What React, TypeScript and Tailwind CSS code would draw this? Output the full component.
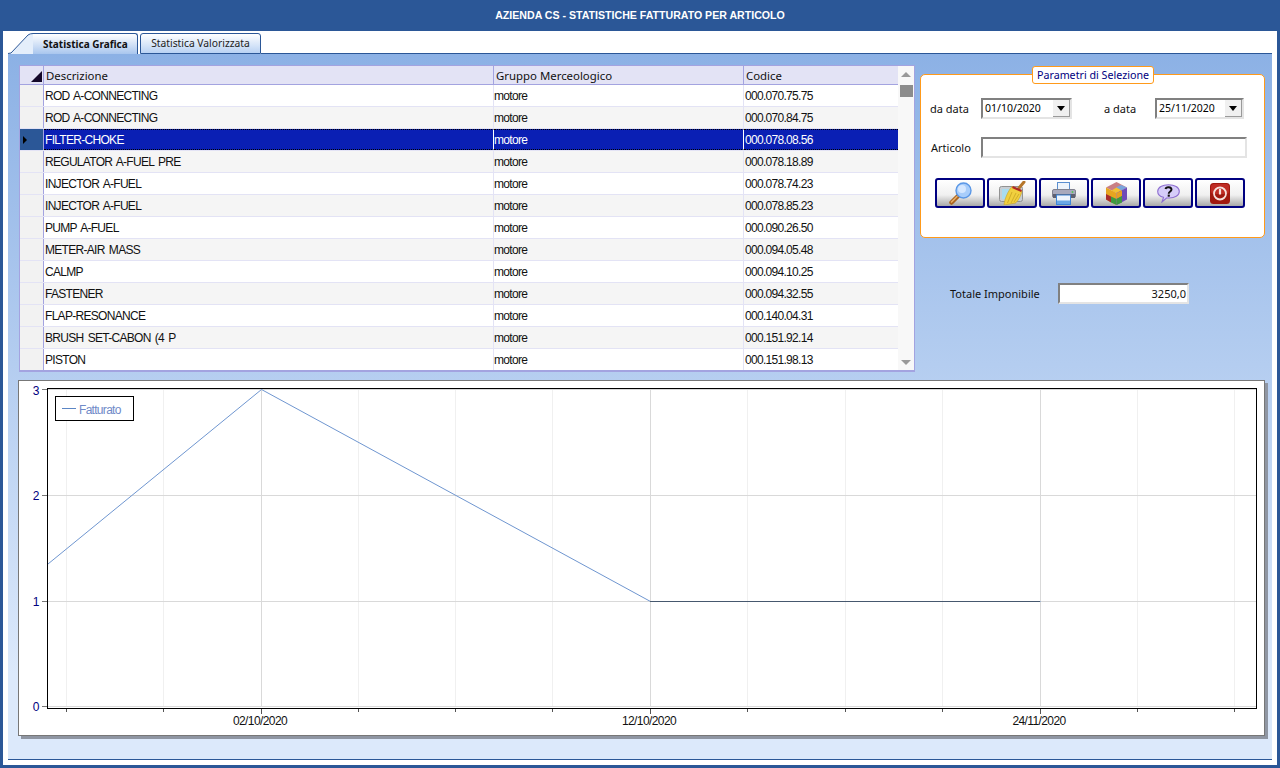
const rows = [
  ["ROD A-CONNECTING", "000.070.75.75"],
  ["ROD A-CONNECTING", "000.070.84.75"],
  ["FILTER-CHOKE", "000.078.08.56"],
  ["REGULATOR A-FUEL PRE", "000.078.18.89"],
  ["INJECTOR A-FUEL", "000.078.74.23"],
  ["INJECTOR A-FUEL", "000.078.85.23"],
  ["PUMP A-FUEL", "000.090.26.50"],
  ["METER-AIR MASS", "000.094.05.48"],
  ["CALMP", "000.094.10.25"],
  ["FASTENER", "000.094.32.55"],
  ["FLAP-RESONANCE", "000.140.04.31"],
  ["BRUSH SET-CABON (4 P", "000.151.92.14"],
  ["PISTON", "000.151.98.13"],
];

const arial = "font-['Liberation_Sans',Arial,sans-serif]";
const tahoma = "font-['Noto_Sans',Tahoma,sans-serif]";
const dotted = "border-y border-y-black [border-top-style:dotted] [border-bottom-style:dotted]";

function SearchIcon() {
  return (
    <svg width="23" height="23" viewBox="0 0 23 23">
      <path d="M2.500 20.500 L9 14" stroke="#a9641f" strokeWidth="4.500" strokeLinecap="round" />
      <path d="M2.500 20 L8 14.500" stroke="#eab06a" strokeWidth="1.600" strokeLinecap="round" />
      <circle cx="14.500" cy="8.500" r="7.500" fill="#a8cdfb" stroke="#5a97e6" strokeWidth="1.400" />
      <circle cx="13" cy="7" r="4" fill="#d5e7ff" />
    </svg>
  );
}

function BroomIcon() {
  return (
    <svg width="27" height="24" viewBox="0 0 27 24">
      <rect x="0.500" y="5.500" width="23" height="15" rx="2" fill="#c9cfd4" stroke="#929292" />
      <rect x="3" y="8" width="18" height="10" fill="#a9dcf0" />
      <path d="M7 20.500 h10 v2 h-10 z" fill="#a2a2a2" />
      <path d="M20 7 L25 1" stroke="#b5762a" strokeWidth="3" strokeLinecap="round" />
      <path d="M13 5.500 L23 10 C22 15 19 20 16.500 22 L5 24 C5.500 18 9 10 13 5.500 Z" fill="#f1cf3e" stroke="#c9a323" strokeWidth="0.600" />
      <path d="M13.500 6 L22.500 10" stroke="#b02a25" strokeWidth="2.200" />
      <path d="M13 11 L8.500 22 M17 12 L12 22 M20 13 L15 21" stroke="#c9a323" strokeWidth="0.800" />
    </svg>
  );
}

function PrinterIcon() {
  return (
    <svg width="24" height="23" viewBox="0 0 24 23">
      <rect x="5.500" y="0.500" width="12" height="8" fill="#eef4fb" stroke="#5b8fd0" />
      <rect x="0.500" y="7.500" width="23" height="8" rx="1.500" fill="#a8a9bc" stroke="#80818f" />
      <rect x="1" y="12" width="22" height="4" fill="#5e6070" />
      <circle cx="20.500" cy="10" r="0.900" fill="#55c855" />
      <rect x="4.500" y="13" width="14" height="9.500" fill="#eef5fd" stroke="#3f86d8" />
      <rect x="5" y="18.500" width="13" height="3.500" fill="#6aa7e6" />
    </svg>
  );
}

function CubeIcon() {
  return (
    <svg width="21" height="23" viewBox="0 0 21 23">
      <path d="M10.500 0 L21 5.500 L10.500 11 L0 5.500 Z" fill="#c97f84" />
      <path d="M15 3 L21 5.500 L15.500 8.500 L10 5.500 Z" fill="#7aa4dc" />
      <path d="M5.500 8.500 L10.500 5.500 L15.500 8.500 L10.500 11 Z" fill="#f2c233" />
      <path d="M0 5.500 L10.500 11 L10.500 23 L0 17.500 Z" fill="#e6a520" />
      <path d="M0 12 L5 14.500 L5 20.500 L0 17.500 Z" fill="#a92b2b" />
      <path d="M5 14.500 L10.500 17 L10.500 23 L5 20.500 Z" fill="#3e9a3e" />
      <path d="M10.500 11 L21 5.500 L21 17.500 L10.500 23 Z" fill="#6f4ab8" />
      <path d="M10.500 11 L16 8.500 L16 14 L10.500 17 Z" fill="#e8a020" />
      <path d="M10.500 17 L16 14 L16 20.500 L10.500 23 Z" fill="#3e9a3e" />
    </svg>
  );
}

function HelpIcon() {
  return (
    <svg width="23" height="19" viewBox="0 0 23 19">
      <path d="M11.500 0.700 C17.500 0.700 22.300 3.300 22.300 7.500 C22.300 11.700 17.500 14 12.500 14 L9.500 14 L5 18 L6.500 13.300 C3 12.500 0.700 10.500 0.700 7.500 C0.700 3.300 5.500 0.700 11.500 0.700 Z" fill="#d6cdf9" stroke="#8e6fd0" strokeWidth="1.100" />
      <path d="M8.500 5 C9 2.500 14.500 2.500 14.500 5.500 C14.500 7.500 11.700 7.500 11.700 9.800" fill="none" stroke="#111" strokeWidth="1.900" />
      <rect x="10.700" y="10.600" width="2.100" height="2.100" fill="#111" />
    </svg>
  );
}

function PowerIcon() {
  return (
    <svg width="20" height="21" viewBox="0 0 20 21">
      <rect x="0" y="0" width="20" height="21" rx="3.500" fill="#a0180f" />
      <rect x="1" y="1" width="18" height="10" rx="3" fill="#bf2c24" />
      <circle cx="10" cy="10.500" r="6" fill="none" stroke="#f6e0dc" strokeWidth="1.800" />
      <path d="M10 6 V11.500" stroke="#f6e0dc" strokeWidth="2.200" />
    </svg>
  );
}

function ToolButton({ children }: { children: React.ReactNode }) {
  return (
    <button className="w-[50px] h-[30px] flex items-center justify-center rounded-[3px] border-2 border-[#000080] bg-[linear-gradient(#ffffff_0%,#f0f0f0_58%,#a9a9a9_100%)] overflow-hidden">
      {children}
    </button>
  );
}

function DateBox({ value, width }: { value: string; width: string }) {
  return (
    <div className={`${width} h-[21px] flex items-center justify-between bg-white border-2 border-[#808080] border-r-[#e4e4e4] border-b-[#e4e4e4]`}>
      <span className={`${tahoma} text-[10.5px] text-black pl-[2px] pt-[1px]`}>{value}</span>
      <span className="w-[17px] h-[17px] flex items-center justify-center bg-[#f0f0f0] border-r border-b border-[#9a9a9a]">
        <span className="w-0 h-0 border-x-[4px] border-x-transparent border-t-[5px] border-t-black" />
      </span>
    </div>
  );
}

function Chart() {
  const minor = [66, 163, 358, 455, 552, 747, 845, 942, 1137, 1234];
  const major = [261, 650, 1040];
  return (
    <svg width="1245" height="354" viewBox="19 381 1245 354" className="block">
      {minor.map((x) => (
        <g key={x}>
          <line x1={x + 0.5} x2={x + 0.5} y1="389" y2="706" stroke="#f0f0f0" />
          <line x1={x + 0.5} x2={x + 0.5} y1="708" y2="712" stroke="#555" />
        </g>
      ))}
      {major.map((x) => (
        <g key={x}>
          <line x1={x + 0.5} x2={x + 0.5} y1="389" y2="706" stroke="#d9d9d9" />
          <line x1={x + 0.5} x2={x + 0.5} y1="708" y2="714" stroke="#555" />
        </g>
      ))}
      {[389, 495, 601, 706].map((y) => (
        <g key={y}>
          <line x1="48" x2="1257" y1={y + 0.5} y2={y + 0.5} stroke="#d9d9d9" />
          <line x1="42" x2="47" y1={y + 0.5} y2={y + 0.5} stroke="#777" />
        </g>
      ))}
      <rect x="47.5" y="388.5" width="1209" height="320" fill="none" stroke="#000" />
      <polyline points="48,564 261.5,389.5 650.5,601.5 1040.5,601.5" fill="none" stroke="#6f96d0" strokeWidth="1" />
      <line x1="650" x2="1040" y1="601.5" y2="601.5" stroke="#46586e" />
      {[["3", 395], ["2", 500], ["1", 606], ["0", 711]].map(([t, y]) => (
        <text key={t} x="36" y={y} textAnchor="middle" fill="#000080" fontSize="12" fontFamily="Liberation Sans, sans-serif">{t}</text>
      ))}
      {[["02/10/2020", 260], ["12/10/2020", 649], ["24/11/2020", 1039]].map(([t, x]) => (
        <text key={t} x={x} y="725" textAnchor="middle" fill="#111" fontSize="12" letterSpacing="-0.6" fontFamily="Liberation Sans, sans-serif">{t}</text>
      ))}
      <rect x="55.5" y="396.5" width="78" height="24" fill="#fff" stroke="#000" />
      <line x1="62" x2="76" y1="408.5" y2="408.5" stroke="#5b86c5" />
      <text x="79" y="414" fill="#6f8ac8" fontSize="12" letterSpacing="-0.7" fontFamily="Liberation Sans, sans-serif">Fatturato</text>
    </svg>
  );
}

export default function App() {
  return (
    <div className="w-[1280px] h-[768px] overflow-hidden flex flex-col bg-[#2b5797]">
      <div className={`${arial} h-[31px] shrink-0 flex items-center justify-center text-white text-[10.6px] font-bold`}>
        AZIENDA CS - STATISTICHE FATTURATO PER ARTICOLO
      </div>
      <div className="mx-[3px] mb-[3px] flex-1 min-h-0 bg-white px-[5px] pt-[2px] flex flex-col">
        <div className={`${tahoma} h-[21px] shrink-0 flex items-end`}>
          <svg width="25" height="21" viewBox="0 0 25 21" className="shrink-0">
            <path d="M0 20.500 L3 20 L20 2 Q22 0.500 25 0.500 L25 21 L0 21 Z" fill="#e4eefb" />
            <path d="M0 20.500 L3 20 L20 2 Q22 0.500 25 0.500" fill="none" stroke="#2b5797" />
          </svg>
          <div className="w-[105px] h-[21px] flex items-center pl-[10px] text-[10px] font-bold text-[#111] border-t border-r border-[#2b5797] rounded-tr-[3px] bg-[linear-gradient(#ffffff,#a9c6ee)]">
            Statistica Grafica
          </div>
          <div className="ml-[2px] w-[121px] h-[21px] flex items-center justify-center text-[10.3px] text-[#222] border border-[#2b5797] rounded-t-[3px] bg-[linear-gradient(#ffffff,#b9d2f3)]">
            Statistica Valorizzata
          </div>
          <div className="flex-1 h-[21px] border-b border-[#2b5797]" />
        </div>
        <div className="flex-1 min-h-0 bg-[linear-gradient(#8cb1e5,#dce9fb_88%)] border-b border-[#2b5797] mb-[5px] pt-[11px] flex flex-col">
          <div className="flex h-[307px] shrink-0 pl-[11px]">
            <div className="w-[896px] h-[307px] bg-[#f8f8f8] border border-[#a3a3e0] border-b-2 flex overflow-hidden">
              <div className="w-[878px] shrink-0 bg-white">
                <div className={`${tahoma} flex h-[19px] bg-[#e3e3f5] border-b border-[#a3a3e0] text-[11.4px] text-[#111]`}>
                  <div className="w-[24px] border-r border-[#a3a3e0] relative">
                    <span className="absolute right-[1px] bottom-[2px] w-0 h-0 border-l-[11px] border-l-transparent border-b-[11px] border-b-[#14082a]" />
                  </div>
                  <div className="w-[450px] pl-[2px] border-r border-[#a3a3e0] leading-[19px]">Descrizione</div>
                  <div className="w-[250px] pl-[2px] border-r border-[#a3a3e0] leading-[19px]">Gruppo Merceologico</div>
                  <div className="flex-1 pl-[2px] leading-[19px]">Codice</div>
                </div>
                {rows.map((r, i) => {
                  const selected = i === 2;
                  return (
                    <div
                      key={r[1]}
                      className={`${arial} flex h-[22px] border-b text-[12px] tracking-[-0.7px] [word-spacing:1.5px] ${selected ? "bg-[#0a1fb4] text-white border-[#e3e3f5] leading-[21px]" : i % 2 === 0 ? "bg-white text-[#111] border-[#e3e3f5] leading-[23px]" : "bg-[#f5f5f5] text-[#111] border-[#e3e3f5] leading-[23px]"}`}
                    >
                      <div className={`w-[24px] shrink-0 border-r border-[#a3a3e0] flex items-center pl-[3px] ${selected ? "bg-[#2b5797]" : "bg-[#f2f2f2]"}`}>
                        {selected && <span className="w-0 h-0 border-y-[4px] border-y-transparent border-l-[4px] border-l-black" />}
                      </div>
                      <div className={`w-[450px] shrink-0 pl-[1px] border-r ${selected ? `border-r-white ${dotted}` : "border-[#e3e3f5]"}`}>{r[0]}</div>
                      <div className={`w-[250px] shrink-0 border-r ${selected ? `border-r-white ${dotted}` : "border-[#e3e3f5]"}`}>motore</div>
                      <div className={`flex-1 pl-[1px] ${selected ? dotted : ""}`}>{r[1]}</div>
                    </div>
                  );
                })}
              </div>
              <div className="flex-1 flex flex-col items-center pt-[6px]">
                <span className="w-0 h-0 border-x-[5px] border-x-transparent border-b-[5px] border-b-[#999]" />
                <span className="mt-[8px] w-[13px] h-[12px] bg-[#8c8c8c]" />
                <span className="mt-auto mb-[5px] w-0 h-0 border-x-[5px] border-x-transparent border-t-[5px] border-t-[#999]" />
              </div>
            </div>
            <div className="ml-[5px] w-[345px] pt-[9px]">
              <div className={`${tahoma} relative h-[164px] bg-white border border-[#ff9a1a] rounded-[5px] text-[11px] text-[#111]`}>
                <div className="absolute left-[111px] top-[-9px] h-[18px] w-[122px] flex items-center justify-center whitespace-nowrap bg-white border border-[#ff9a1a] rounded-[3px] text-[#000080] text-[10.7px]">
                  Parametri di Selezione
                </div>
                <div className="flex items-center pt-[23px] pl-[9px]">
                  <span className="w-[51px] pt-[2px]">da data</span>
                  <DateBox value="01/10/2020" width="w-[91px]" />
                  <span className="ml-[32px] w-[51px] pt-[2px]">a data</span>
                  <DateBox value="25/11/2020" width="w-[89px]" />
                </div>
                <div className="flex items-center mt-[18px] pl-[10px]">
                  <span className="w-[50px] pt-[2px]">Articolo</span>
                  <div className="w-[266px] h-[21px] bg-white border-2 border-[#808080] border-r-[#e4e4e4] border-b-[#e4e4e4]" />
                </div>
                <div className="flex mt-[20px] pl-[14px] gap-[2px]">
                  <ToolButton><SearchIcon /></ToolButton>
                  <ToolButton><BroomIcon /></ToolButton>
                  <ToolButton><PrinterIcon /></ToolButton>
                  <ToolButton><CubeIcon /></ToolButton>
                  <ToolButton><HelpIcon /></ToolButton>
                  <ToolButton><PowerIcon /></ToolButton>
                </div>
              </div>
              <div className={`${tahoma} flex items-center mt-[45px] pl-[30px] text-[11px] text-[#111]`}>
                <span className="w-[108px] pt-[2px]">Totale Imponibile</span>
                <div className="w-[131px] h-[21px] bg-white border-2 border-[#808080] border-r-[#e4e4e4] border-b-[#e4e4e4] text-right pr-[1px] leading-[17px]">3250,0</div>
              </div>
            </div>
          </div>
          <div className="ml-[10px] mt-[8px] w-[1247px] h-[356px] bg-white border border-[#777] shadow-[3px_3px_0_#8f96a3]">
            <Chart />
          </div>
        </div>
      </div>
    </div>
  );
}
